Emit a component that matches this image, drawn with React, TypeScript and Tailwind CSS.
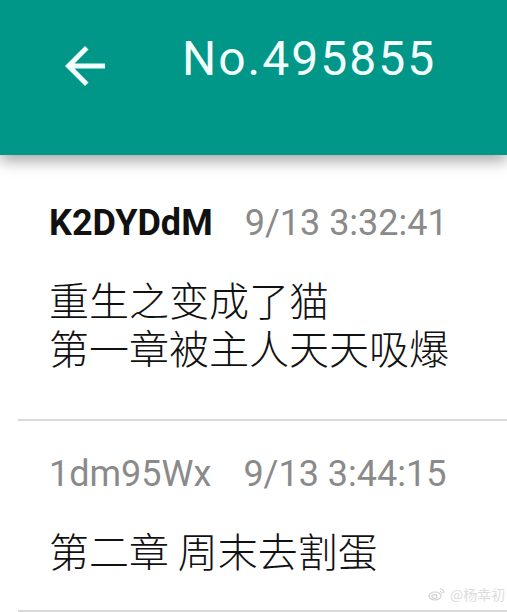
import React from "react";

const roboto = { fontFamily: 'Roboto, "Noto Sans CJK SC", sans-serif' };
const cjk = { fontFamily: '"Noto Sans CJK SC", "Noto Sans", sans-serif' };

function Card({
  name,
  bold,
  time,
  lines,
  pt,
  pb,
}: {
  name: string;
  bold: boolean;
  time: string;
  lines: string[];
  pt: string;
  pb: string;
}) {
  return (
    <div className={`ml-[18px] bg-white border-b-[2px] border-[#d9d9d9] pl-[31px] ${pt} ${pb}`}>
      <div className="flex items-baseline text-[36px] leading-[44px]" style={roboto}>
        <span className={bold ? "font-bold text-[#111]" : "font-normal text-[#8a8a8a]"}>{name}</span>
        <span className="ml-[32px] text-[#8a8a8a]">{time}</span>
      </div>
      <div className="mt-[30px] text-[40px] leading-[48px] font-light text-[#111]" style={cjk}>
        {lines.map((l) => (
          <div key={l} className="whitespace-pre h-[48px]">{l}</div>
        ))}
      </div>
    </div>
  );
}

export default function App() {
  return (
    <div className="relative w-[507px] h-[612px] overflow-hidden bg-white">
      <div className="relative z-10 h-[155px] bg-[#009688] shadow-[0_6px_14px_rgba(0,0,0,0.35)] flex items-start">
        <svg
          className="ml-[55px] mt-[36px]"
          width="60"
          height="60"
          viewBox="0 0 24 24"
          fill="#f2fffd"
        >
          <path d="M20 11H7.83l5.59-5.59L12 4l-8 8 8 8 1.41-1.41L7.83 13H20v-2z" />
        </svg>
        <div
          className="ml-[67px] mt-[27px] text-[48px] leading-[64px] tracking-[2px] text-[#f2fffd]"
          style={roboto}
        >
          No.495855
        </div>
      </div>
      <Card
        name="K2DYDdM"
        bold
        time="9/13 3:32:41"
        lines={["重生之变成了猫", "第一章被主人天天吸爆"]}
        pt="pt-[46px]"
        pb="pb-[48px]"
      />
      <Card
        name="1dm95Wx"
        bold={false}
        time="9/13 3:44:15"
        lines={["第二章 周末去割蛋"]}
        pt="pt-[31px]"
        pb="pb-[36px]"
      />
      <div
        className="absolute left-[428px] top-[586px] flex items-center gap-[4px] text-[14px] leading-[16px] text-[#dcdcdc]"
        style={cjk}
      >
        <svg width="18" height="14" viewBox="0 0 18 14" fill="none" stroke="#d0d0d0" strokeWidth="1.2">
          <ellipse cx="7" cy="9" rx="6" ry="4" />
          <ellipse cx="6.5" cy="9.5" rx="2.5" ry="1.8" />
          <path d="M12 2c2 0 4 1.5 4 4" />
          <path d="M12 4.5c1 0 2 .8 2 2" />
        </svg>
        <span>@杨幸初</span>
      </div>
    </div>
  );
}
